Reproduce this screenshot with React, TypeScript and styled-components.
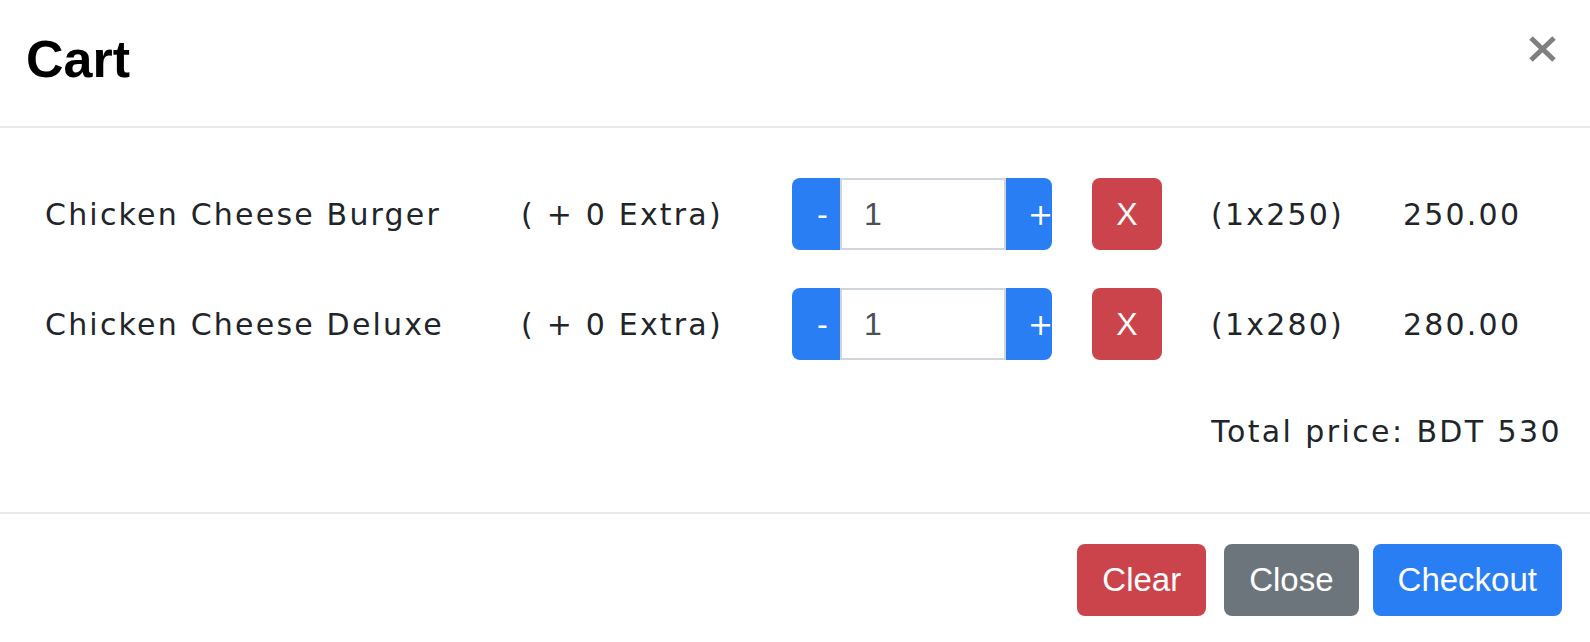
import React, { useState } from "react";
import styled, { createGlobalStyle } from "styled-components";

const COLORS = {
  primary: "#2a7ef4",
  danger: "#cc444b",
  secondary: "#6d757c",
  text: "#212529",
  border: "#e6e9ec",
  inputBorder: "#d0d5db",
  inputText: "#495057",
};

const GlobalStyle = createGlobalStyle`
  html, body {
    margin: 0;
    padding: 0;
    background: #fff;
  }
  body {
    font-family: "DejaVu Sans", Verdana, sans-serif;
    color: ${COLORS.text};
  }
`;

const Modal = styled.div`
  width: 1590px;
  display: flex;
  flex-direction: column;
`;

const Header = styled.header`
  display: flex;
  justify-content: space-between;
  align-items: flex-start;
  padding: 29px 33px 37px 26px;
  border-bottom: 2px solid ${COLORS.border};
`;

const Title = styled.h5`
  margin: 0;
  font-family: "Liberation Sans", Arial, sans-serif;
  font-weight: 700;
  font-size: 52px;
  line-height: 60px;
  color: #000;
`;

const CloseButton = styled.button`
  display: flex;
  margin-top: 6px;
  padding: 0;
  border: 0;
  background: none;
  cursor: pointer;
`;

const Body = styled.div`
  display: flex;
  flex-direction: column;
  padding: 50px 28px 58px 45px;
`;

const ItemList = styled.div`
  display: flex;
  flex-direction: column;
  gap: 38px;
`;

const ItemRow = styled.div`
  display: grid;
  grid-template-columns: 476px 271px 300px 119px 192px auto;
  align-items: center;
  height: 72px;
  font-size: 30px;
  line-height: 45px;
  letter-spacing: 2.2px;
`;

const Cell = styled.span`
  white-space: nowrap;
`;

const Stepper = styled.div`
  display: flex;
  width: 260px;
  height: 72px;
`;

const StepButton = styled.button<{ $width: number; $side: "left" | "right" }>`
  width: ${p => p.$width}px;
  flex: none;
  padding: 0 0 0 ${p => (p.$side === "left" ? 25 : 22)}px;
  text-align: left;
  border: 0;
  border-radius: ${p => (p.$side === "left" ? "8px 0 0 8px" : "0 8px 8px 0")};
  background: ${COLORS.primary};
  color: #fff;
  font-family: "DejaVu Sans", Verdana, sans-serif;
  font-size: 30px;
  letter-spacing: 0;
  overflow: visible;
  white-space: nowrap;
  cursor: pointer;
`;

const QtyInput = styled.input`
  width: 166px;
  box-sizing: border-box;
  height: 72px;
  margin: 0;
  padding: 0 0 0 22px;
  border: 2px solid ${COLORS.inputBorder};
  background: #fff;
  color: ${COLORS.inputText};
  font-family: "Liberation Sans", Arial, sans-serif;
  font-size: 32px;
  letter-spacing: 0;
  outline: none;
`;

const RemoveButton = styled.button`
  width: 70px;
  height: 72px;
  padding: 0;
  border: 0;
  border-radius: 8px;
  background: ${COLORS.danger};
  color: #fff;
  font-family: "Liberation Sans", Arial, sans-serif;
  font-size: 32px;
  letter-spacing: 0;
  cursor: pointer;
`;

const TotalLine = styled.div`
  margin-top: 49px;
  text-align: right;
  font-size: 30px;
  line-height: 45px;
  letter-spacing: 2.4px;
`;

const Footer = styled.footer`
  display: flex;
  justify-content: flex-end;
  padding: 30px 28px;
  border-top: 2px solid ${COLORS.border};
`;

const ActionButton = styled.button<{ $variant: "danger" | "secondary" | "primary"; $gap?: number }>`
  height: 72px;
  margin-right: ${p => p.$gap ?? 0}px;
  padding: 0 25px;
  border: 0;
  border-radius: 8px;
  background: ${p => COLORS[p.$variant]};
  color: #fff;
  font-family: "Liberation Sans", Arial, sans-serif;
  font-size: 33px;
  line-height: 48px;
  cursor: pointer;
`;

type Item = { id: number; name: string; extra: number; price: number; qty: number };

const INITIAL_ITEMS: Item[] = [
  { id: 1, name: "Chicken Cheese Burger", extra: 0, price: 250, qty: 1 },
  { id: 2, name: "Chicken Cheese Deluxe", extra: 0, price: 280, qty: 1 },
];

const App: React.FC = () => {
  const [items, setItems] = useState<Item[]>(INITIAL_ITEMS);

  const changeQty = (id: number, delta: number) => {
    setItems(list =>
      list.map(it => (it.id === id ? { ...it, qty: Math.max(1, it.qty + delta) } : it))
    );
  };

  const removeItem = (id: number) => setItems(list => list.filter(it => it.id !== id));

  const total = items.reduce((sum, it) => sum + (it.price + it.extra) * it.qty, 0);

  return (
    <>
      <GlobalStyle />
      <Modal>
        <Header>
          <Title>Cart</Title>
          <CloseButton aria-label="Close">
            <svg width="29" height="28" viewBox="0 0 29 28">
              <path d="M3 3 L26 25 M26 3 L3 25" stroke="#7f7f7f" strokeWidth="5" />
            </svg>
          </CloseButton>
        </Header>

        <Body>
          <ItemList>
            {items.map(it => (
              <ItemRow key={it.id}>
                <Cell>{it.name}</Cell>
                <Cell>( + {it.extra} Extra)</Cell>
                <div>
                  <Stepper>
                    <StepButton $width={48} $side="left" onClick={() => changeQty(it.id, -1)}>
                      -
                    </StepButton>
                    <QtyInput value={it.qty} readOnly />
                    <StepButton $width={46} $side="right" onClick={() => changeQty(it.id, 1)}>
                      +
                    </StepButton>
                  </Stepper>
                </div>
                <div>
                  <RemoveButton onClick={() => removeItem(it.id)}>X</RemoveButton>
                </div>
                <Cell>
                  ({it.qty}x{it.price})
                </Cell>
                <Cell>{(it.price * it.qty).toFixed(2)}</Cell>
              </ItemRow>
            ))}
          </ItemList>
          <TotalLine>Total price: BDT {total}</TotalLine>
        </Body>

        <Footer>
          <ActionButton $variant="danger" $gap={18} onClick={() => setItems([])}>
            Clear
          </ActionButton>
          <ActionButton $variant="secondary" $gap={14}>
            Close
          </ActionButton>
          <ActionButton $variant="primary">Checkout</ActionButton>
        </Footer>
      </Modal>
    </>
  );
};

export default App;
